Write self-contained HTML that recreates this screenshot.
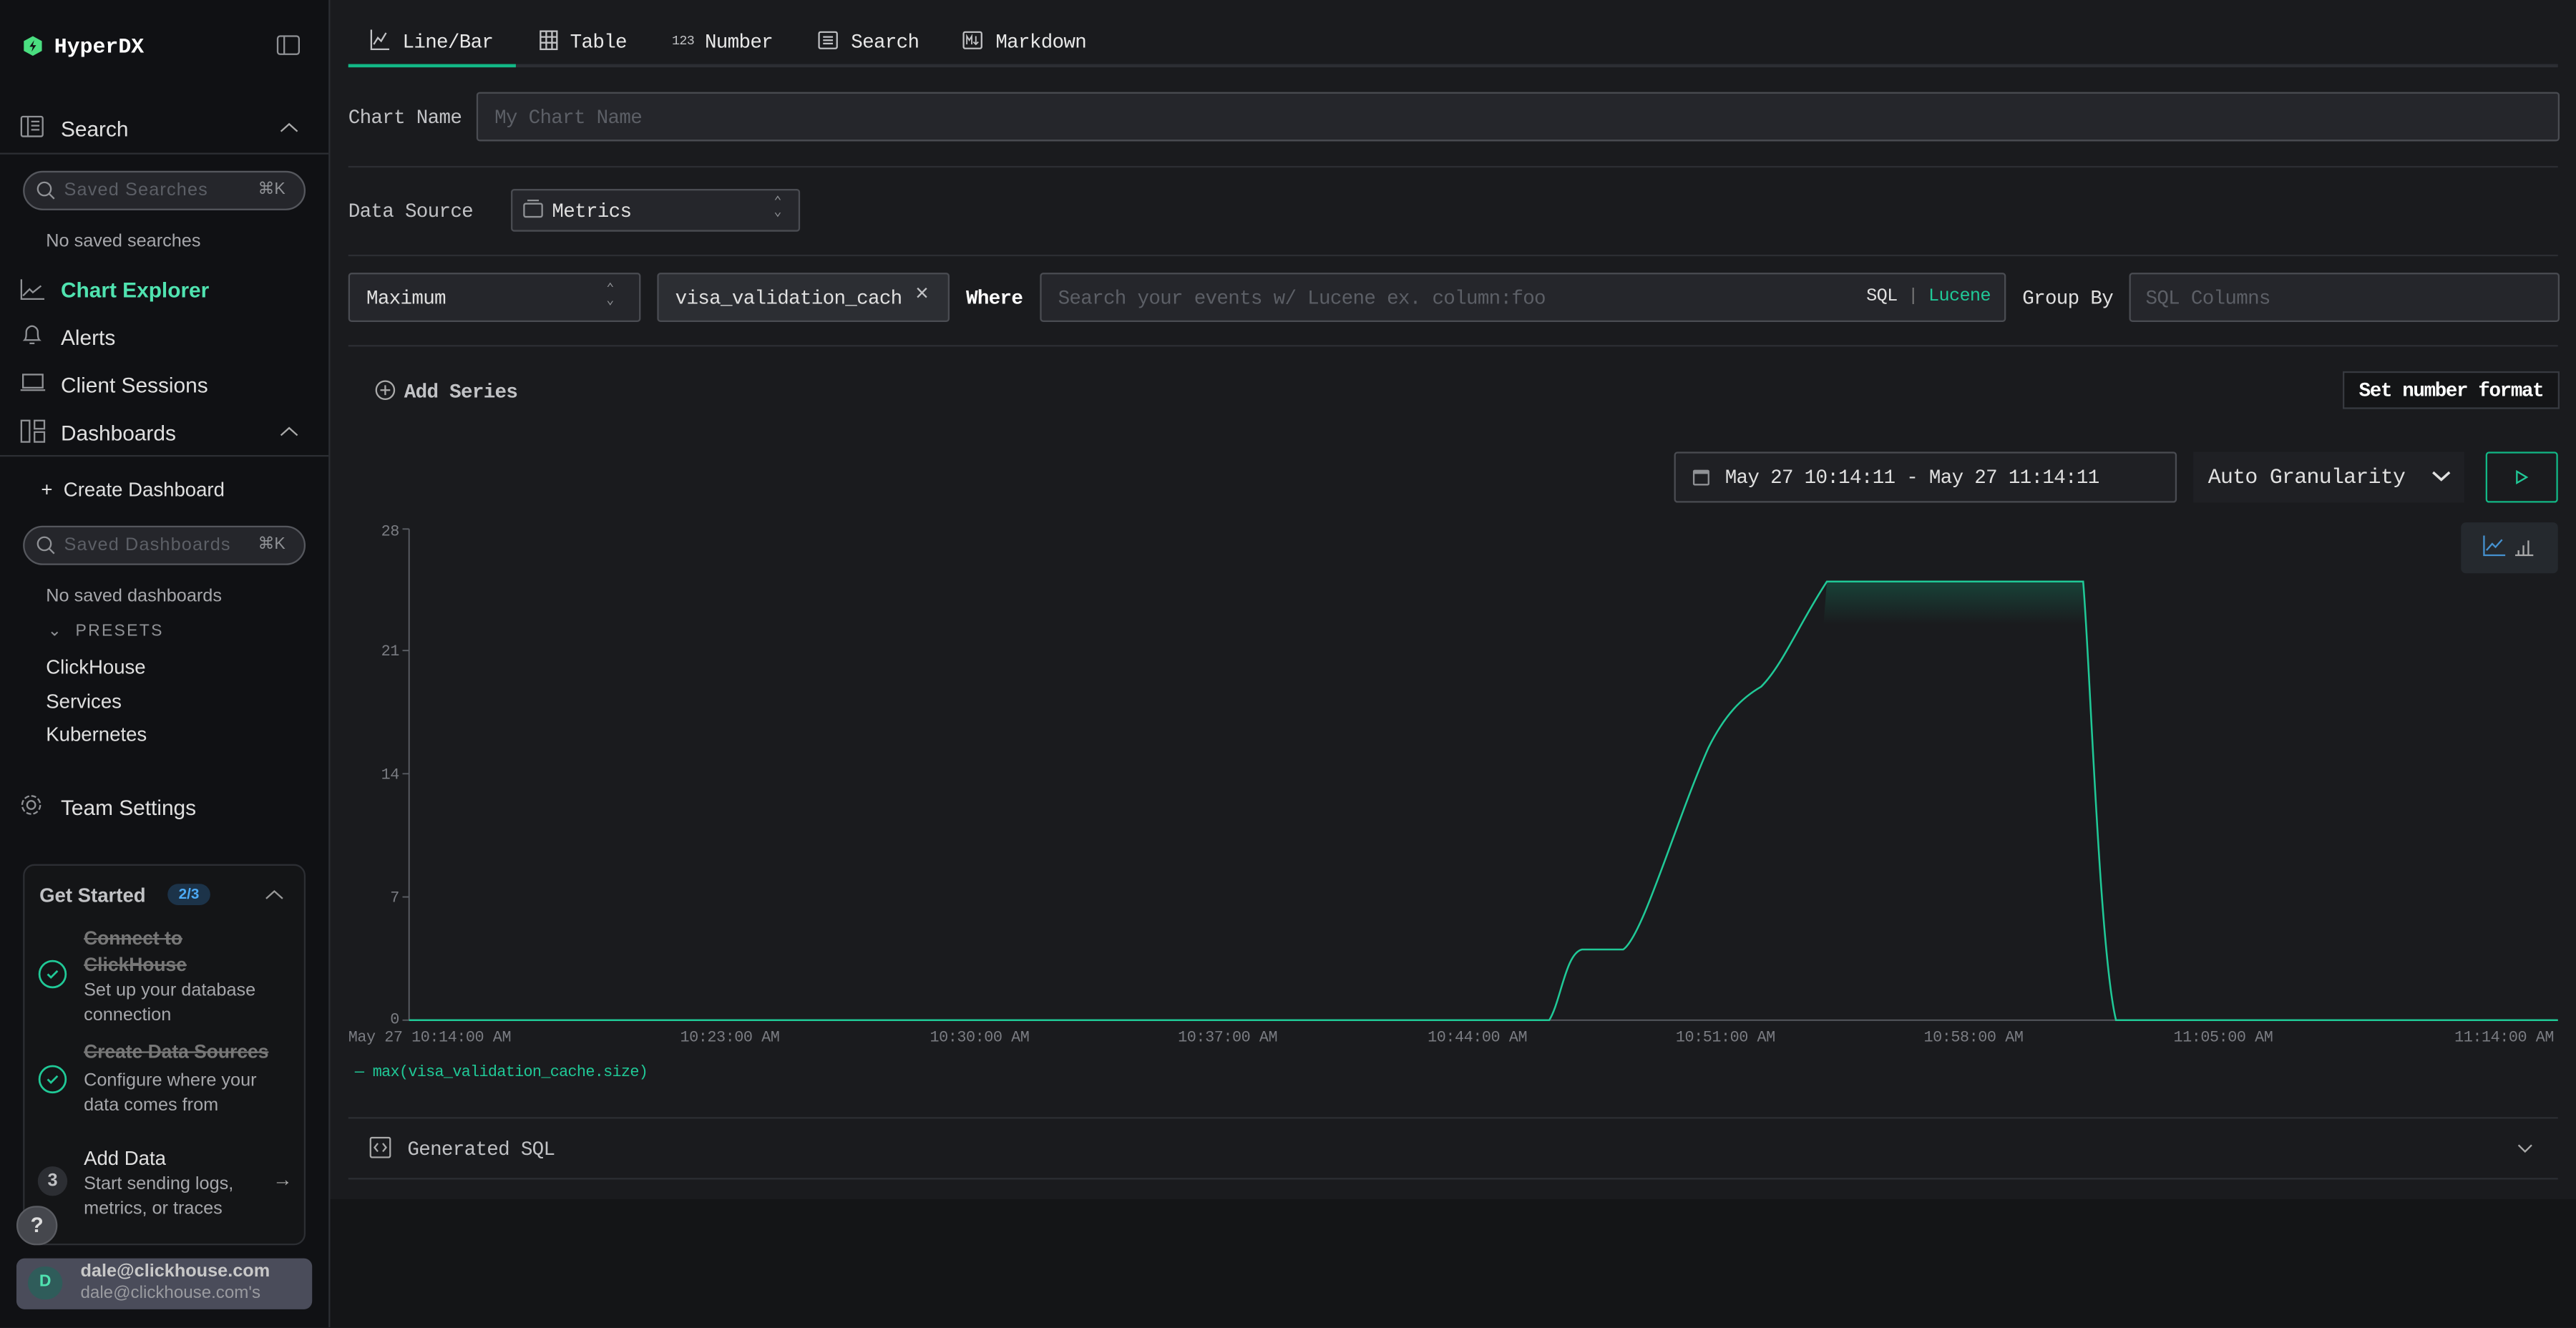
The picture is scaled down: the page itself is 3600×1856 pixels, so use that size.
<!DOCTYPE html>
<html><head><meta charset="utf-8"><style>
*{box-sizing:border-box;margin:0;padding:0}
html,body{width:3600px;height:1856px;overflow:hidden;background:#1a1b1e}
#w{width:1568px;height:808px;transform:scale(2.29592);transform-origin:0 0;position:relative;font-family:"Liberation Sans",sans-serif;color:#c1c2c5}
.sb{position:absolute;left:0;top:0;width:201px;height:808px;background:#101114;border-right:1px solid #2c2e33}
.mono{font-family:"Liberation Mono",monospace}
.main.mono{letter-spacing:-0.3px}
.abs{position:absolute}
.main{position:absolute;left:201px;top:0;width:1367px;height:730px;background:#1a1b1e}
.below{position:absolute;left:201px;top:730px;width:1367px;height:78px;background:#141517}
.inp{position:absolute;background:#25262b;border:1px solid #4a4c52;border-radius:2px}
.hr{position:absolute;height:1px;background:#2c2e33}
.lbl{font-size:12px;color:#c1c2c5}
.ax{position:absolute;font-size:9.5px;color:#7a7c82;font-family:"Liberation Mono",monospace;letter-spacing:-0.2px}
</style></head><body><div id="w">
<div class="sb">
  <svg class="abs" style="left:13px;top:21px" width="14" height="14" viewBox="0 0 14 14"><path d="M7 1 L12.5 4 V10 L7 13 L1.5 10 V4Z" fill="#4ade80"/><path d="M7.8 3.5 L5 7.5 H7 L6.2 10.5 L9 6.5 H7Z" fill="#101114"/></svg>
  <div class="abs mono" style="left:33px;top:21px;font-size:13px;font-weight:bold;color:#fff">HyperDX</div>
  <svg class="abs" style="left:168px;top:21px" width="15" height="13"><rect x="1" y="1" width="13" height="11" rx="1.5" fill="none" stroke="#909296"/><line x1="5" y1="1" x2="5" y2="12" stroke="#909296"/></svg>
  <svg class="abs" style="left:12px;top:70px" width="16" height="15"><rect x="1" y="1" width="13" height="12" rx="1" fill="none" stroke="#909296"/><path d="M5 1V13M7 4H12M7 6.5H12M7 9H12" stroke="#909296"/></svg>
  <div class="abs" style="left:37px;top:71px;font-size:13px;color:#e0e0e0">Search</div>
  <svg class="abs" style="left:170px;top:74px" width="12" height="8"><path d="M1 6L6 1.5L11 6" fill="none" stroke="#aaa"/></svg>
  <div class="hr" style="left:0;top:93px;width:200px"></div>
  <div class="abs" style="left:14px;top:104px;width:172px;height:24px;border:1px solid #55575d;border-radius:12px;background:#25262b"></div>
  <svg class="abs" style="left:22px;top:110px" width="12" height="12"><circle cx="5" cy="5" r="4" fill="none" stroke="#909296"/><path d="M8 8L11 11" stroke="#909296"/></svg>
  <div class="abs" style="left:39px;top:110px;font-size:11px;color:#5c5f66;letter-spacing:.5px">Saved Searches</div>
  <div class="abs" style="left:157px;top:110px;font-size:10px;color:#909296">⌘K</div>
  <div class="abs" style="left:28px;top:141px;font-size:11px;color:#a6a7ab">No saved searches</div>
  <svg class="abs" style="left:12px;top:170px" width="16" height="13"><path d="M1 0V12H15M2 10L6 6L8 8L13 4" fill="none" stroke="#909296"/></svg>
  <div class="abs" style="left:37px;top:169px;font-size:13px;font-weight:bold;color:#50e3b0">Chart Explorer</div>
  <svg class="abs" style="left:13px;top:197px" width="13" height="14"><path d="M2 10C3 9 3 7 3 5C3 3 5 1.5 6.5 1.5C8 1.5 10 3 10 5C10 7 10 9 11 10Z M5 12H8" fill="none" stroke="#909296"/></svg>
  <div class="abs" style="left:37px;top:198px;font-size:13px;color:#e0e0e0">Alerts</div>
  <svg class="abs" style="left:12px;top:227px" width="16" height="12"><rect x="2" y="1" width="12" height="8" fill="none" stroke="#909296"/><path d="M0.5 10.5H15.5" stroke="#909296"/></svg>
  <div class="abs" style="left:37px;top:227px;font-size:13px;color:#e0e0e0">Client Sessions</div>
  <svg class="abs" style="left:12px;top:255px" width="16" height="15"><rect x="1" y="1" width="5" height="13" fill="none" stroke="#909296"/><rect x="9" y="1" width="6" height="5" fill="none" stroke="#909296"/><rect x="9" y="8" width="6" height="6" fill="none" stroke="#909296"/></svg>
  <div class="abs" style="left:37px;top:256px;font-size:13px;color:#e0e0e0">Dashboards</div>
  <svg class="abs" style="left:170px;top:259px" width="12" height="8"><path d="M1 6L6 1.5L11 6" fill="none" stroke="#aaa"/></svg>
  <div class="hr" style="left:0;top:277px;width:200px"></div>
  <div class="abs" style="left:25px;top:291px;font-size:12px;color:#e0e0e0">+&nbsp;&nbsp;Create Dashboard</div>
  <div class="abs" style="left:14px;top:320px;width:172px;height:24px;border:1px solid #55575d;border-radius:12px;background:#25262b"></div>
  <svg class="abs" style="left:22px;top:326px" width="12" height="12"><circle cx="5" cy="5" r="4" fill="none" stroke="#909296"/><path d="M8 8L11 11" stroke="#909296"/></svg>
  <div class="abs" style="left:39px;top:326px;font-size:11px;color:#5c5f66;letter-spacing:.5px">Saved Dashboards</div>
  <div class="abs" style="left:157px;top:326px;font-size:10px;color:#909296">⌘K</div>
  <div class="abs" style="left:28px;top:357px;font-size:11px;color:#a6a7ab">No saved dashboards</div>
  <div class="abs" style="left:29px;top:379px;font-size:10px;color:#909296;letter-spacing:1px">⌄&nbsp; PRESETS</div>
  <div class="abs" style="left:28px;top:399px;font-size:12px;color:#e0e0e0">ClickHouse</div>
  <div class="abs" style="left:28px;top:420px;font-size:12px;color:#e0e0e0">Services</div>
  <div class="abs" style="left:28px;top:440px;font-size:12px;color:#e0e0e0">Kubernetes</div>
  <svg class="abs" style="left:12px;top:483px" width="14" height="14"><circle cx="7" cy="7" r="2.5" fill="none" stroke="#909296"/><circle cx="7" cy="7" r="5.5" fill="none" stroke="#909296" stroke-dasharray="3 1.3"/></svg>
  <div class="abs" style="left:37px;top:484px;font-size:13px;color:#e0e0e0">Team Settings</div>
  <div class="abs" style="left:14px;top:526px;width:172px;height:232px;border:1px solid #2c2e33;border-radius:7px;background:#141517"></div>
  <div class="abs" style="left:24px;top:538px;font-size:12px;font-weight:bold;color:#c1c2c5">Get Started</div>
  <div class="abs" style="left:102px;top:538px;width:26px;height:13px;border-radius:7px;background:#1c3349;color:#4dabf7;font-size:9px;font-weight:bold;text-align:center;line-height:13px">2/3</div>
  <svg class="abs" style="left:161px;top:541px" width="12" height="7"><path d="M1 6L6 1.5L11 6" fill="none" stroke="#999"/></svg>
  <svg class="abs" style="left:23px;top:584px" width="18" height="18"><circle cx="9" cy="9" r="8" fill="none" stroke="#20c997" stroke-width="1.2"/><path d="M6 9L8 11L12 7" fill="none" stroke="#20c997" stroke-width="1.2"/></svg>
  <div class="abs" style="left:51px;top:564px;font-size:11.5px;line-height:16px;color:#777;text-decoration:line-through;font-weight:bold">Connect to<br>ClickHouse</div>
  <div class="abs" style="left:51px;top:596px;font-size:11px;line-height:15px;color:#a6a7ab">Set up your database<br>connection</div>
  <svg class="abs" style="left:23px;top:648px" width="18" height="18"><circle cx="9" cy="9" r="8" fill="none" stroke="#20c997" stroke-width="1.2"/><path d="M6 9L8 11L12 7" fill="none" stroke="#20c997" stroke-width="1.2"/></svg>
  <div class="abs" style="left:51px;top:635px;font-size:11.5px;color:#777;text-decoration:line-through;font-weight:bold">Create Data Sources</div>
  <div class="abs" style="left:51px;top:651px;font-size:11px;line-height:15px;color:#a6a7ab">Configure where your<br>data comes from</div>
  <div class="abs" style="left:23px;top:710px;width:18px;height:18px;border-radius:9px;background:#2c2e33;color:#c1c2c5;font-size:11px;font-weight:bold;text-align:center;line-height:18px">3</div>
  <div class="abs" style="left:51px;top:698px;font-size:12px;color:#e0e0e0">Add Data</div>
  <div class="abs" style="left:51px;top:714px;font-size:11px;line-height:15px;color:#a6a7ab">Start sending logs,<br>metrics, or traces</div>
  <div class="abs" style="left:166px;top:711px;font-size:12px;color:#aaa">→</div>
  <div class="abs" style="left:10px;top:734px;width:25px;height:24px;border-radius:12px;background:#45474d;border:1px solid #5a5c62;color:#ddd;font-size:13px;font-weight:bold;text-align:center;line-height:22px">?</div>
  <div class="abs" style="left:10px;top:766px;width:180px;height:31px;border-radius:5px;background:#4a4c5a"></div>
  <div class="abs" style="left:17px;top:771px;width:21px;height:20px;border-radius:10px;background:#2f5c5a;color:#50e3b0;font-size:10px;font-weight:bold;text-align:center;line-height:20px">D</div>
  <div class="abs" style="left:49px;top:768px;font-size:11px;font-weight:bold;color:#c8c8c8">dale@clickhouse.com</div>
  <div class="abs" style="left:49px;top:781px;font-size:10.5px;color:#9a9ba0">dale@clickhouse.com's</div>
</div>

<div class="main mono">
  <div class="abs" style="left:11px;top:39px;width:1345px;height:2px;background:#2c2e33"></div>
  <div class="abs" style="left:11px;top:39px;width:102px;height:2px;background:#12b886"></div>
  <svg class="abs" style="left:24px;top:18px" width="12" height="13"><path d="M1 0V12H12M2.5 9L5 5L7 7L10 2" fill="none" stroke="#c1c2c5"/></svg>
  <div class="abs" style="left:44px;top:19px;font-size:12px;color:#e8e8e8">Line/Bar</div>
  <svg class="abs" style="left:127px;top:18px" width="12" height="13"><rect x="1" y="1" width="10" height="11" fill="none" stroke="#c1c2c5"/><path d="M1 4.5H11M1 8H11M4.5 1V12M8 1V12" stroke="#c1c2c5"/></svg>
  <div class="abs" style="left:146px;top:19px;font-size:12px;color:#e8e8e8">Table</div>
  <div class="abs" style="left:208px;top:21px;font-size:8px;color:#c1c2c5">123</div>
  <div class="abs" style="left:228px;top:19px;font-size:12px;color:#e8e8e8">Number</div>
  <svg class="abs" style="left:297px;top:19px" width="12" height="11"><rect x="0.5" y="0.5" width="11" height="10" rx="1" fill="none" stroke="#c1c2c5"/><path d="M3 3.5H9M3 5.5H9M3 7.5H9" stroke="#c1c2c5"/></svg>
  <div class="abs" style="left:317px;top:19px;font-size:12px;color:#e8e8e8">Search</div>
  <svg class="abs" style="left:385px;top:19px" width="12" height="11"><rect x="0.5" y="0.5" width="11" height="10" rx="1" fill="none" stroke="#c1c2c5"/><path d="M2.5 8V3L4 5.5L5.5 3V8M8 3V8M6.5 6.5L8 8L9.5 6.5" fill="none" stroke="#c1c2c5" stroke-width=".8"/></svg>
  <div class="abs" style="left:405px;top:19px;font-size:12px;color:#e8e8e8">Markdown</div>

  <div class="abs lbl" style="left:11px;top:65px">Chart Name</div>
  <div class="inp" style="left:89px;top:56px;width:1268px;height:30px"></div>
  <div class="abs" style="left:100px;top:65px;font-size:12px;color:#5c5f66">My Chart Name</div>
  <div class="hr" style="left:11px;top:101px;width:1345px"></div>

  <div class="abs lbl" style="left:11px;top:122px">Data Source</div>
  <div class="inp" style="left:110px;top:115px;width:176px;height:26px"></div>
  <svg class="abs" style="left:117px;top:121px" width="13" height="12"><rect x="1" y="3" width="11" height="8" rx="1" fill="none" stroke="#909296"/><path d="M3 1H10" stroke="#909296"/></svg>
  <div class="abs" style="left:135px;top:122px;font-size:12px;color:#e0e0e0">Metrics</div>
  <div class="abs" style="left:270px;top:121px;font-size:8px;color:#909296;line-height:6px">⌃<br>⌄</div>
  <div class="hr" style="left:11px;top:155px;width:1345px"></div>

  <div class="inp" style="left:11px;top:166px;width:178px;height:30px"></div>
  <div class="abs" style="left:22px;top:175px;font-size:12px;color:#e0e0e0">Maximum</div>
  <div class="abs" style="left:168px;top:173px;font-size:8px;color:#909296;line-height:7px">⌃<br>⌄</div>
  <div class="inp" style="left:199px;top:166px;width:178px;height:30px;background:#2c2e33"></div>
  <div class="abs" style="left:210px;top:175px;font-size:12px;color:#e0e0e0">visa_validation_cach</div>
  <div class="abs" style="left:356px;top:172px;font-size:14px;color:#c1c2c5">×</div>
  <div class="abs" style="left:387px;top:175px;font-size:12px;color:#fff;font-weight:bold">Where</div>
  <div class="inp" style="left:432px;top:166px;width:588px;height:30px"></div>
  <div class="abs" style="left:443px;top:175px;font-size:12px;color:#5c5f66">Search your events w/ Lucene ex. column:foo</div>
  <div class="abs" style="left:935px;top:175px;font-size:11px;color:#e0e0e0">SQL <span style="color:#777">|</span> <span style="color:#20c997">Lucene</span></div>
  <div class="abs" style="left:1030px;top:175px;font-size:12px;color:#e0e0e0">Group By</div>
  <div class="inp" style="left:1095px;top:166px;width:262px;height:30px"></div>
  <div class="abs" style="left:1105px;top:175px;font-size:12px;color:#5c5f66">SQL Columns</div>
  <div class="hr" style="left:11px;top:210px;width:1345px"></div>

  <svg class="abs" style="left:27px;top:231px" width="13" height="13"><circle cx="6.5" cy="6.5" r="5.5" fill="none" stroke="#aaa"/><path d="M6.5 3.5V9.5M3.5 6.5H9.5" stroke="#aaa"/></svg>
  <div class="abs" style="left:45px;top:232px;font-size:12px;color:#c1c2c5;font-weight:bold">Add Series</div>
  <div class="abs" style="left:1225px;top:226px;width:132px;height:23px;border:1px solid #373a40;background:#141517;color:#fff;font-size:12px;font-weight:bold;text-align:center;line-height:22px;letter-spacing:-0.6px">Set number format</div>

  <div class="inp" style="left:818px;top:275px;width:306px;height:31px;background:#1f2024"></div>
  <svg class="abs" style="left:829px;top:285px" width="11" height="11"><rect x="0.5" y="1" width="10" height="9.5" rx="1" fill="#909296"/><rect x="1.5" y="3.5" width="8" height="6" fill="#1f2024"/></svg>
  <div class="abs" style="left:849px;top:284px;font-size:12px;color:#e0e0e0">May 27 10:14:11 - May 27 11:14:11</div>
  <div class="abs" style="left:1134px;top:275px;width:165px;height:31px;background:#1f2024"></div>
  <div class="abs" style="left:1143px;top:283px;font-size:13px;color:#e0e0e0">Auto Granularity</div>
  <svg class="abs" style="left:1279px;top:286px" width="12" height="8"><path d="M1 1.5L6 6L11 1.5" fill="none" stroke="#e0e0e0" stroke-width="1.5"/></svg>
  <div class="abs" style="left:1312px;top:275px;width:44px;height:31px;border:1px solid #12b886;border-radius:2px"></div>
  <svg class="abs" style="left:1330px;top:286px" width="8" height="9"><path d="M1 1L7 4.5L1 8Z" fill="none" stroke="#20c997"/></svg>
  <div class="abs" style="left:1297px;top:318px;width:59px;height:31px;background:#25292e;border-radius:3px"></div>
  <svg class="abs" style="left:1310px;top:326px" width="14" height="13"><path d="M1 0V12H14M2.5 9L6 5L8 7L12 2.5" fill="none" stroke="#4dabf7" stroke-opacity=".8"/></svg>
  <svg class="abs" style="left:1329px;top:327px" width="13" height="12"><path d="M1 11H12M3 11V8M6 11V5M9 11V2" fill="none" stroke="#aaa"/></svg>

  <svg class="abs" style="left:0;top:310px" width="1367" height="340" viewBox="201 310 1367 340">
    <defs><linearGradient id="g" x1="0" y1="0" x2="0" y2="1"><stop offset="0" stop-color="#12b886" stop-opacity=".25"/><stop offset="1" stop-color="#12b886" stop-opacity="0"/></linearGradient></defs>
    <path d="M249 322V621H1557" fill="none" stroke="#5c5f66" stroke-width=".8"/>
    <path d="M245 322H249M245 396H249M245 471H249M245 546H249M245 621H249" stroke="#5c5f66" stroke-width=".8"/>
    <path d="M1112 354H1268L1270 380H1110Z" fill="url(#g)"/>
    <path d="M249 621H943C950 610 953 580 963 578H988C1000 570 1020 500 1040 455C1050 435 1060 425 1072 418C1085 405 1095 380 1112 354H1268C1272 400 1278 580 1288 621H1557" fill="none" stroke="#20c997" stroke-width="1.1"/>
  </svg>
  <div class="ax" style="left:30px;top:318px;width:12px;text-align:right">28</div>
  <div class="ax" style="left:30px;top:391px;width:12px;text-align:right">21</div>
  <div class="ax" style="left:30px;top:466px;width:12px;text-align:right">14</div>
  <div class="ax" style="left:30px;top:541px;width:12px;text-align:right">7</div>
  <div class="ax" style="left:30px;top:615px;width:12px;text-align:right">0</div>
  <div class="ax" style="left:11px;top:626px">May 27 10:14:00 AM</div>
  <div class="ax" style="left:213px;top:626px">10:23:00 AM</div>
  <div class="ax" style="left:365px;top:626px">10:30:00 AM</div>
  <div class="ax" style="left:516px;top:626px">10:37:00 AM</div>
  <div class="ax" style="left:668px;top:626px">10:44:00 AM</div>
  <div class="ax" style="left:819px;top:626px">10:51:00 AM</div>
  <div class="ax" style="left:970px;top:626px">10:58:00 AM</div>
  <div class="ax" style="left:1122px;top:626px">11:05:00 AM</div>
  <div class="ax" style="left:1293px;top:626px">11:14:00 AM</div>
  <div class="abs" style="left:15px;top:647px;font-size:9.5px;color:#20c997">— max(visa_validation_cache.size)</div>

  <div class="hr" style="left:11px;top:680px;width:1345px"></div>
  <svg class="abs" style="left:24px;top:692px" width="13" height="13"><rect x="0.5" y="0.5" width="12" height="12" rx="1" fill="none" stroke="#aaa"/><path d="M5 4L3 6.5L5 9M8 4L10 6.5L8 9" fill="none" stroke="#aaa"/></svg>
  <div class="abs" style="left:47px;top:693px;font-size:12px;color:#c1c2c5">Generated SQL</div>
  <svg class="abs" style="left:1331px;top:696px" width="10" height="7"><path d="M1 1L5 5L9 1" fill="none" stroke="#aaa"/></svg>
  <div class="hr" style="left:11px;top:717px;width:1345px"></div>
</div>
<div class="below"></div>
</div></body></html>
